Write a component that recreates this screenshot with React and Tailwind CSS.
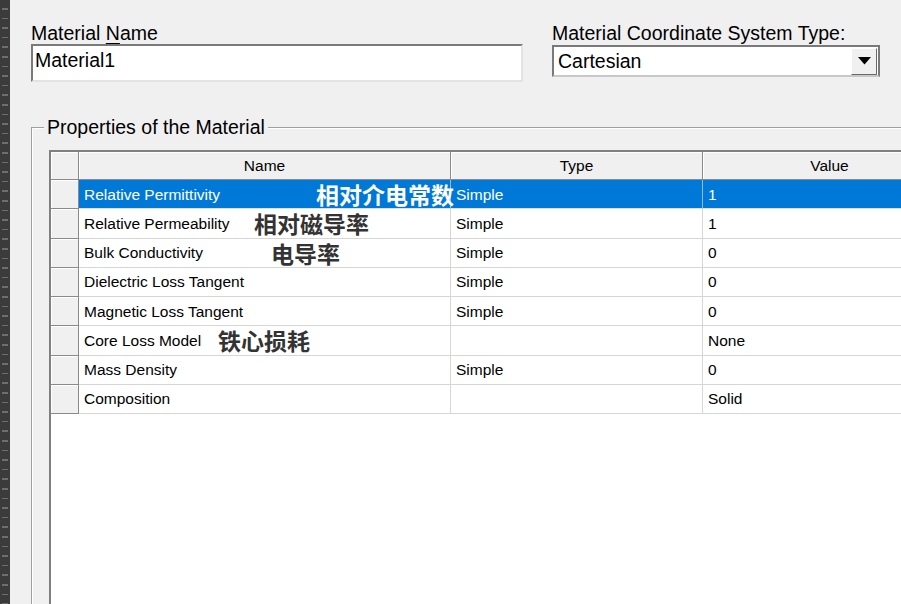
import React from "react";

const rows = [
  { name: "Relative Permittivity", type: "Simple", value: "1", cn: "相对介电常数", cnLeft: "left-[237px]", selected: true },
  { name: "Relative Permeability", type: "Simple", value: "1", cn: "相对磁导率", cnLeft: "left-[175px]" },
  { name: "Bulk Conductivity", type: "Simple", value: "0", cn: "电导率", cnLeft: "left-[192px]" },
  { name: "Dielectric Loss Tangent", type: "Simple", value: "0" },
  { name: "Magnetic Loss Tangent", type: "Simple", value: "0" },
  { name: "Core Loss Model", type: "", value: "None", cn: "铁心损耗", cnLeft: "left-[139px]" },
  { name: "Mass Density", type: "Simple", value: "0" },
  { name: "Composition", type: "", value: "Solid" },
];

function HeaderCell({ w, children }) {
  return (
    <div className={`${w} flex shrink-0 items-center justify-center border-b border-r border-[#8a8a8a] bg-[#f0f0f0] shadow-[inset_1px_1px_0_#fff]`}>
      {children}
    </div>
  );
}

function Row({ row }) {
  const sel = row.selected;
  const cell = sel
    ? "bg-[#0078d7] text-white border-r border-b border-r-[#8fbbe6] border-b-[#e0e0e0]"
    : "bg-white text-black border-r border-b border-[#d6d6d6]";
  return (
    <div className="flex h-[29.25px]">
      <div className="w-[28px] shrink-0 border-b border-r border-[#8a8a8a] bg-[#f0f0f0] shadow-[inset_1px_1px_0_#fff]" />
      <div className={`relative flex w-[372px] shrink-0 items-center pl-[5px] ${cell}`}>
        {row.name}
        {row.cn && (
          <span
            className={`absolute top-[3px] ${row.cnLeft} h-[23px] whitespace-nowrap font-['Noto_Sans_CJK_SC',sans-serif] text-[23px] font-bold leading-[23px] ${sel ? "text-white" : "text-[#333]"}`}
          >
            {row.cn}
          </span>
        )}
      </div>
      <div className={`flex w-[252px] shrink-0 items-center pl-[5px] ${cell}`}>{row.type}</div>
      <div className={`flex w-[254px] shrink-0 items-center pl-[5px] ${cell}`}>{row.value}</div>
    </div>
  );
}

export default function App() {
  return (
    <div className="flex h-[604px] w-[901px] overflow-hidden bg-[#f0f0f0] font-['Liberation_Sans',Arial,sans-serif] text-black">
      {/* dark ruler strip on the far left */}
      <div className="w-[10px] shrink-0 bg-[#3b3b3b]">
        <div className="ml-[2px] h-full w-[6px] bg-[image:repeating-linear-gradient(to_bottom,transparent_0px,transparent_8px,#6e6e6e_8px,#6e6e6e_9.6px)]" />
      </div>

      <div className="min-w-0 flex-1 pl-[21px]">
        <div className="flex gap-[29px] pt-[22px] text-[19.5px]">
          <div className="w-[492px] shrink-0">
            <div className="h-[22px] leading-[22px]">
              Material <span className="underline decoration-1 underline-offset-[3px]">N</span>ame
            </div>
            <div className="flex h-[38px] items-start border-2 border-b-[#e3e3e3] border-l-[#7a7a7a] border-r-[#e3e3e3] border-t-[#7a7a7a] bg-white pl-[2px] pt-[3px] leading-[22px]">
              Material1
            </div>
          </div>
          <div className="w-[328px] shrink-0">
            <div className="h-[22px] leading-[22px]">Material Coordinate System Type:</div>
            <div className="mt-[1px] flex h-[32px] items-center border-2 border-b-[#c8c8c8] border-l-[#7a7a7a] border-r-[#7a7a7a] border-t-[#7a7a7a] bg-white pl-[4px] leading-[22px]">
              <span className="flex-1">Cartesian</span>
              <div className="mr-[1px] flex h-[27px] w-[26px] items-center justify-center border border-b-[#6a6a6a] border-l-white border-r-[#6a6a6a] border-t-white bg-[#f0f0f0]">
                <svg width="13" height="8" viewBox="0 0 13 8">
                  <path d="M0 0 H13 L6.5 7.5 Z" fill="#000" />
                </svg>
              </div>
            </div>
          </div>
        </div>

        {/* group box */}
        <div className="mt-[45px] h-[500px] w-[900px] border-l border-t border-[#a0a0a0] shadow-[inset_1px_1px_0_#fff]">
          <div className="-mt-[12px] ml-[12px] h-[22px] w-fit bg-[#f0f0f0] px-[3px] text-[19.5px] leading-[22px]">
            Properties of the Material
          </div>
          <div className="ml-[17px] mt-[12px] h-[470px] w-[910px] border-l-2 border-t-2 border-[#808080] bg-white text-[15.5px]">
            <div className="flex h-[28px]">
              <HeaderCell w="w-[28px]" />
              <HeaderCell w="w-[372px]">Name</HeaderCell>
              <HeaderCell w="w-[252px]">Type</HeaderCell>
              <HeaderCell w="w-[254px]">Value</HeaderCell>
            </div>
            {rows.map((r) => (
              <Row key={r.name} row={r} />
            ))}
          </div>
        </div>
      </div>
    </div>
  );
}
